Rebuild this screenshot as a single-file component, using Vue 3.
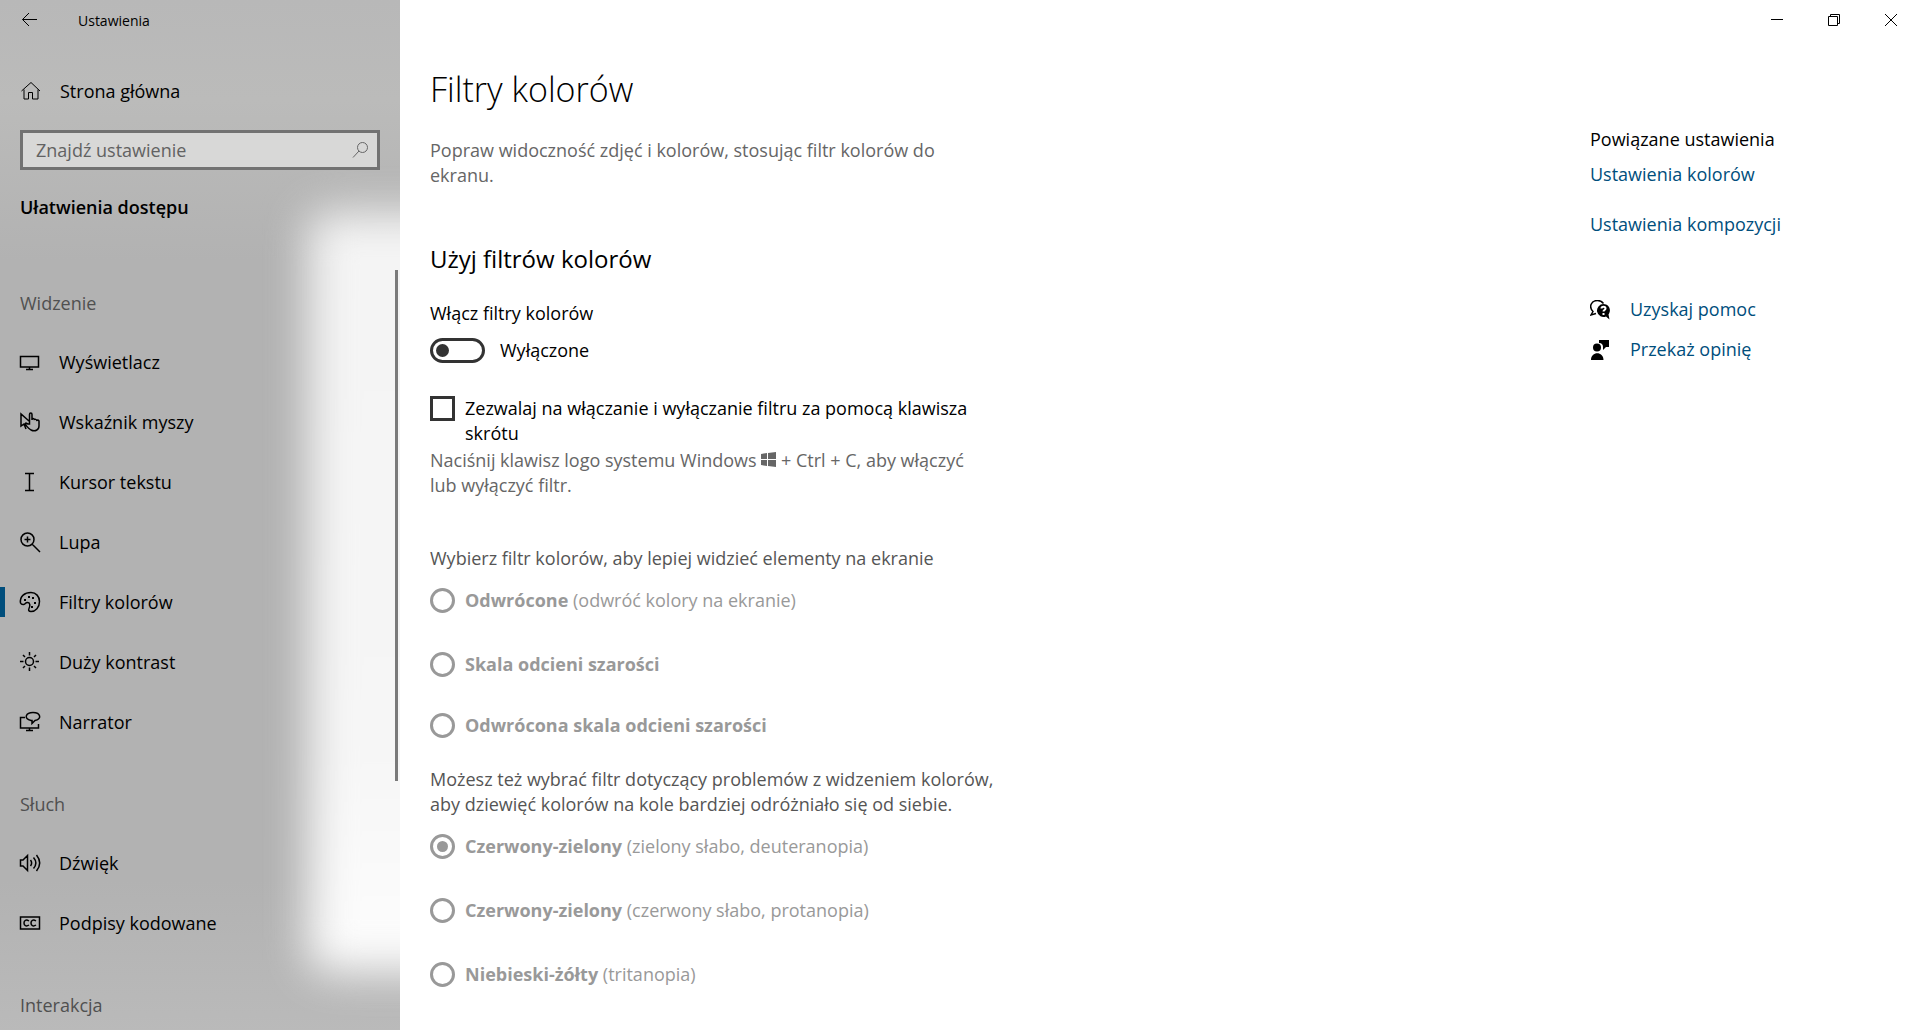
<template>
  <div class="window">
    <aside class="sidebar">
      <header class="title-row">
        <button class="back" aria-label="Wstecz">
          <svg width="20" height="20" viewBox="0 0 20 20"><path d="M17 9.500H2.500M9 3 2.500 9.500 9 16" /></svg>
        </button>
        <span>Ustawienia</span>
      </header>

      <a href="#" class="nav-link home">
        <svg width="20" height="20" viewBox="0 0 20 20"><path d="M1.500 10 11 1.500l9 8.500M4 8.500V18h4.500v-6.500h4V18H18V8.500" /></svg>
        Strona główna
      </a>

      <div class="search">
        <input v-model="query" type="text" placeholder="Znajdź ustawienie" aria-label="Znajdź ustawienie" />
        <svg width="20" height="20" viewBox="0 0 20 20"><circle cx="12.500" cy="7.500" r="5" /><path d="M9 11 3 17.500" /></svg>
      </div>

      <h2 class="category">Ułatwienia dostępu</h2>

      <nav class="nav">
        <section v-for="group in groups" :key="group.title">
          <h3>{{ group.title }}</h3>
          <a
            v-for="item in group.items"
            :key="item.label"
            href="#"
            class="nav-link"
            :class="{ active: item.label === current }"
            @click.prevent="current = item.label"
          >
            <svg width="20" height="20" viewBox="0 0 20 20">
              <path :d="item.path" />
              <path v-if="item.dots" class="dots" :d="item.dots" />
            </svg>
            {{ item.label }}
          </a>
        </section>
      </nav>
      <div class="scrollbar"></div>
    </aside>

    <div class="page">
      <div class="window-buttons">
        <button aria-label="Minimalizuj">
          <svg width="14" height="14" viewBox="0 0 14 14"><path d="M1 6.500h12" /></svg>
        </button>
        <button aria-label="Przywróć">
          <svg width="14" height="14" viewBox="0 0 14 14"><path d="M1.500 3.500h9v9h-9zM3.500 3.500v-2h9v9h-2" /></svg>
        </button>
        <button aria-label="Zamknij">
          <svg width="14" height="14" viewBox="0 0 14 14"><path d="m1 1 12 12M13 1 1 13" /></svg>
        </button>
      </div>

      <div class="columns">
        <main class="content">
          <h1>Filtry kolorów</h1>
          <p class="intro">Popraw widoczność zdjęć i kolorów, stosując filtr kolorów do ekranu.</p>

          <h2>Użyj filtrów kolorów</h2>
          <label for="filters">Włącz filtry kolorów</label>
          <div class="toggle">
            <input id="filters" v-model="enabled" type="checkbox" role="switch" />
            <span>{{ enabled ? 'Włączone' : 'Wyłączone' }}</span>
          </div>

          <label class="check">
            <input v-model="shortcut" type="checkbox" />
            <span>Zezwalaj na włączanie i wyłączanie filtru za pomocą klawisza skrótu</span>
          </label>
          <p class="hint">
            Naciśnij klawisz logo systemu Windows
            <svg width="15" height="15" viewBox="0 0 15 15"><path d="M0 2 6 1v6H0zM7 1l8-1v7H7zM0 8h6v6l-6-1zM7 8h8v7l-8-1z" /></svg>
            + Ctrl + C, aby włączyć lub wyłączyć filtr.
          </p>

          <p class="question">Wybierz filtr kolorów, aby lepiej widzieć elementy na ekranie</p>
          <div class="radios">
            <label v-for="option in basic" :key="option.id" :class="{ plain: !option.note }">
              <input v-model="filter" type="radio" name="filter" :value="option.id" :disabled="!enabled" />
              <span><b>{{ option.name }}</b> {{ option.note }}</span>
            </label>
          </div>

          <p class="question second">
            Możesz też wybrać filtr dotyczący problemów z widzeniem kolorów, aby dziewięć kolorów na kole bardziej odróżniało się od siebie.
          </p>
          <div class="radios">
            <label v-for="option in deficiency" :key="option.id">
              <input v-model="filter" type="radio" name="filter" :value="option.id" :disabled="!enabled" />
              <span><b>{{ option.name }}</b> {{ option.note }}</span>
            </label>
          </div>
        </main>

        <aside class="related">
          <h2>Powiązane ustawienia</h2>
          <a href="#">Ustawienia kolorów</a>
          <a href="#">Ustawienia kompozycji</a>
          <div class="support">
            <a href="#">
              <svg width="20" height="20" viewBox="0 0 20 20">
                <path class="line" d="M6 13.500 1 15l2-3.500C-1.500 7 1 .5 7.500.5 10 .5 12 1.500 13.500 3.500" />
                <path d="M13.500 4a6.500 6.500 0 1 0 2.500 12.500l3.500 3-1-5C22 9.500 18.500 4 13.500 4z" />
                <path class="mark" d="M11.500 8.500c0-2.500 4-2.500 4 0 0 1.500-2 1.500-2 3M13.500 13v2" />
              </svg>
              Uzyskaj pomoc
            </a>
            <a href="#">
              <svg width="20" height="20" viewBox="0 0 20 20">
                <circle cx="7" cy="7.500" r="4" />
                <path d="M1 20c0-9 12.500-9 12.500 0zM9 0h10v7h-3l-3 3V7c0-2-1-4-4-4z" />
              </svg>
              Przekaż opinię
            </a>
          </div>
        </aside>
      </div>
    </div>
  </div>
</template>

<script setup>
import { ref } from 'vue'

const query = ref('')
const current = ref('Filtry kolorów')
const enabled = ref(false)
const shortcut = ref(false)
const filter = ref('deuteranopia')

const groups = [
  {
    title: 'Widzenie',
    items: [
      { label: 'Wyświetlacz', path: 'M.5 4.500h18v10.500H.5zM9.500 15v2.500M6 17.500h7' },
      { label: 'Wskaźnik myszy', path: 'M6 14.500 4 12l-3 2V2l8 7M4 12l2 5M8 12l-2-1c-2 1 2 5 5 7 4 2 8 0 8-4V9c-1-1.500-2-1-2 0-.5-2-2.500-2-2.500-1C14 6 12 6 12 8V2.500C12 .5 9.500.5 9.500 2.500V12z' },
      { label: 'Kursor tekstu', path: 'M5 1.500h9M5 18.500h9M9.500 1.500v17' },
      { label: 'Lupa', path: 'M14 7.500a6.500 6.500 0 1 1-13 0 6.500 6.500 0 0 1 13 0zM12 12l8 8M7.500 4.500v6M4.500 7.500h6' },
      {
        label: 'Filtry kolorów',
        path: 'M.5 11C-.5 4 5 .5 11 .5c5 0 8.500 4 8.500 9 0 6-4 10-8.500 10-2 0-3-1-2-3 1.500-3 1-6-1.500-6C5 10.500 5 13 3 12.500c-1.500 0-2-.5-2.500-1.500z',
        dots: 'M4 7h2v2H4zM8 4h2v2H8zM12 5h2v2h-2zM14 10h2v2h-2zM11 14h2v2h-2z'
      },
      { label: 'Duży kontrast', path: 'M13.500 9.500a4 4 0 1 1-8 0 4 4 0 0 1 8 0zM9.500 0v3.500M9.500 15.500V19M0 9.500h3.500M15.500 9.500H19M3 3l2 2M14 14l2 2M16 3l-2 2M5 14l-2 2' },
      { label: 'Narrator', path: 'M5 5.500H.5v10.500h18V12M9.500 16v2.500M6 18.500h7M11 8.500C3 6.500 6 .5 13 .5c8 0 9 7 2 8l-3 3v-3z' }
    ]
  },
  {
    title: 'Słuch',
    items: [
      { label: 'Dźwięk', path: 'M.5 7v6H3l4.500 4.500v-15L3 7zM10.500 7c1.500 2 1.500 4 0 6M13.500 4.500c3 3.500 3 7.500 0 11M16.500 2c4 5 4 11 0 16' },
      { label: 'Podpisy kodowane', path: 'M.5 4h19v12H.5zM9 8C6 6 4 7.500 4 10s2 4 5 2M16 8c-3-2-5-.5-5 2s2 4 5 2' }
    ]
  },
  { title: 'Interakcja', items: [] }
]

const basic = [
  { id: 'inverted', name: 'Odwrócone', note: '(odwróć kolory na ekranie)' },
  { id: 'grayscale', name: 'Skala odcieni szarości', note: '' },
  { id: 'grayscale-inverted', name: 'Odwrócona skala odcieni szarości', note: '' }
]

const deficiency = [
  { id: 'deuteranopia', name: 'Czerwony-zielony', note: '(zielony słabo, deuteranopia)' },
  { id: 'protanopia', name: 'Czerwony-zielony', note: '(czerwony słabo, protanopia)' },
  { id: 'tritanopia', name: 'Niebieski-żółty', note: '(tritanopia)' }
]
</script>

<style>
body {
  margin: 0;
  background: #fff;
}
</style>

<style scoped>
* {
  box-sizing: border-box;
}

.window {
  display: flex;
  min-height: 100vh;
  font-family: 'Segoe UI', 'Open Sans', 'Noto Sans', sans-serif;
  font-size: 18px;
  line-height: 25px;
  color: #000;
}

h1, h2, h3, p {
  margin: 0;
  font-size: 18px;
  font-weight: 400;
}

a {
  color: inherit;
  text-decoration: none;
}

button {
  display: flex;
  align-items: center;
  justify-content: center;
  padding: 0;
  border: 0;
  background: none;
}

svg {
  flex-shrink: 0;
  fill: none;
  stroke: #000;
}

/* sidebar */
.sidebar {
  position: relative;
  isolation: isolate;
  width: 400px;
  flex-shrink: 0;
  overflow: hidden;
  background: linear-gradient(#b8b8b8, #bbbbba 100px, #b2b2b2 260px, #b2b2b2 880px, #bababa);
}

.sidebar::before {
  content: '';
  position: absolute;
  z-index: -1;
  top: 212px;
  right: -80px;
  bottom: 62px;
  width: 172px;
  border-radius: 20px;
  background: linear-gradient(#f4f4f4, #f6f6f6 70%, #fdfdfd);
  filter: blur(22px);
}

.title-row {
  display: flex;
  align-items: center;
  gap: 38px;
  height: 40px;
  padding-left: 20px;
  font-size: 14px;
}

.nav-link {
  display: flex;
  align-items: center;
  gap: 20px;
  height: 60px;
  padding-left: 20px;
}

.nav-link svg {
  overflow: visible;
}

.home {
  margin: 21px 0 9px;
}

.search {
  display: flex;
  align-items: center;
  height: 40px;
  margin: 0 20px;
  padding: 0 7px 0 13px;
  border: 3px solid #727272;
  background: #d8d8d7;
}

.search input {
  flex: 1;
  min-width: 0;
  padding: 0;
  border: 0;
  outline: none;
  background: none;
  font: inherit;
}

.search input::placeholder {
  color: #626262;
  opacity: 1;
}

.search svg {
  stroke: #666;
}

.category {
  padding: 25px 20px 0;
  font-weight: 600;
}

.nav {
  padding-top: 71px;
}

.nav h3 {
  padding-left: 20px;
  margin-bottom: 16px;
  color: #505050;
}

.nav section + section {
  padding-top: 40px;
}

.nav .nav-link {
  gap: 19px;
}

.nav svg {
  stroke-width: 1.5;
}

.active {
  background: linear-gradient(#004e7c, #004e7c) left center / 5px 30px no-repeat;
}

.nav .dots {
  fill: #000;
  stroke: none;
}

.scrollbar {
  position: absolute;
  top: 270px;
  right: 2px;
  width: 3px;
  height: 511px;
  background: #7a7a7a;
}

/* page */
.page {
  flex: 1;
}

.window-buttons {
  display: flex;
  justify-content: flex-end;
  height: 40px;
  padding-right: 1px;
}

.window-buttons button {
  width: 57px;
}

.columns {
  display: grid;
  grid-template-columns: 1fr 330px;
  padding-left: 30px;
}

.content {
  max-width: 565px;
  padding-top: 24px;
}

h1 {
  font-size: 34px;
  font-weight: 300;
  line-height: 50px;
}

.intro {
  margin-top: 24px;
  color: #666;
}

.content h2 {
  margin: 58px 0 30px;
  font-size: 24px;
}

.content > label {
  display: block;
}

.content input {
  appearance: none;
  flex-shrink: 0;
  margin: 0;
  border: 3px solid #333;
  background: #fff;
}

.toggle {
  display: flex;
  align-items: center;
  gap: 15px;
  margin-top: 12px;
}

.toggle input {
  display: flex;
  align-items: center;
  width: 55px;
  height: 25px;
  padding: 0 3px;
  border-radius: 13px;
}

.toggle input::before {
  content: '';
  width: 13px;
  height: 13px;
  border-radius: 50%;
  background: #333;
}

.toggle input:checked {
  justify-content: flex-end;
}

.content .check {
  display: flex;
  gap: 10px;
  margin-top: 33px;
}

.check input {
  width: 25px;
  height: 25px;
}

.check input:checked {
  background: #004e7c;
}

.hint {
  margin-top: 2px;
  color: #666;
}

.hint svg {
  fill: #666;
  stroke: none;
}

.question {
  margin-top: 48px;
  color: #555;
}

.radios {
  margin-top: 17px;
  color: #999;
}

.radios label {
  display: flex;
  align-items: center;
  gap: 10px;
}

.radios label + label {
  margin-top: 39px;
}

.radios .plain + label {
  margin-top: 36px;
}

.radios input {
  display: grid;
  place-items: center;
  width: 25px;
  height: 25px;
  border-color: #999;
  border-radius: 50%;
}

.radios input:checked::before {
  content: '';
  width: 11px;
  height: 11px;
  border-radius: 50%;
  background: #999;
}

.second {
  margin-top: 29px;
}

/* related settings */
.related {
  padding-top: 87px;
}

.related a {
  display: block;
  margin-top: 25px;
  color: #004e7c;
}

.related h2 + a {
  margin-top: 10px;
}

.support {
  display: grid;
  gap: 15px;
  margin-top: 60px;
}

.related .support a {
  display: flex;
  align-items: center;
  gap: 20px;
  margin: 0;
}

.support svg {
  fill: #000;
  stroke: none;
}

.support .line {
  fill: none;
  stroke: #000;
  stroke-width: 1.5;
}

.support .mark {
  fill: none;
  stroke: #fff;
  stroke-width: 2;
}
</style>
